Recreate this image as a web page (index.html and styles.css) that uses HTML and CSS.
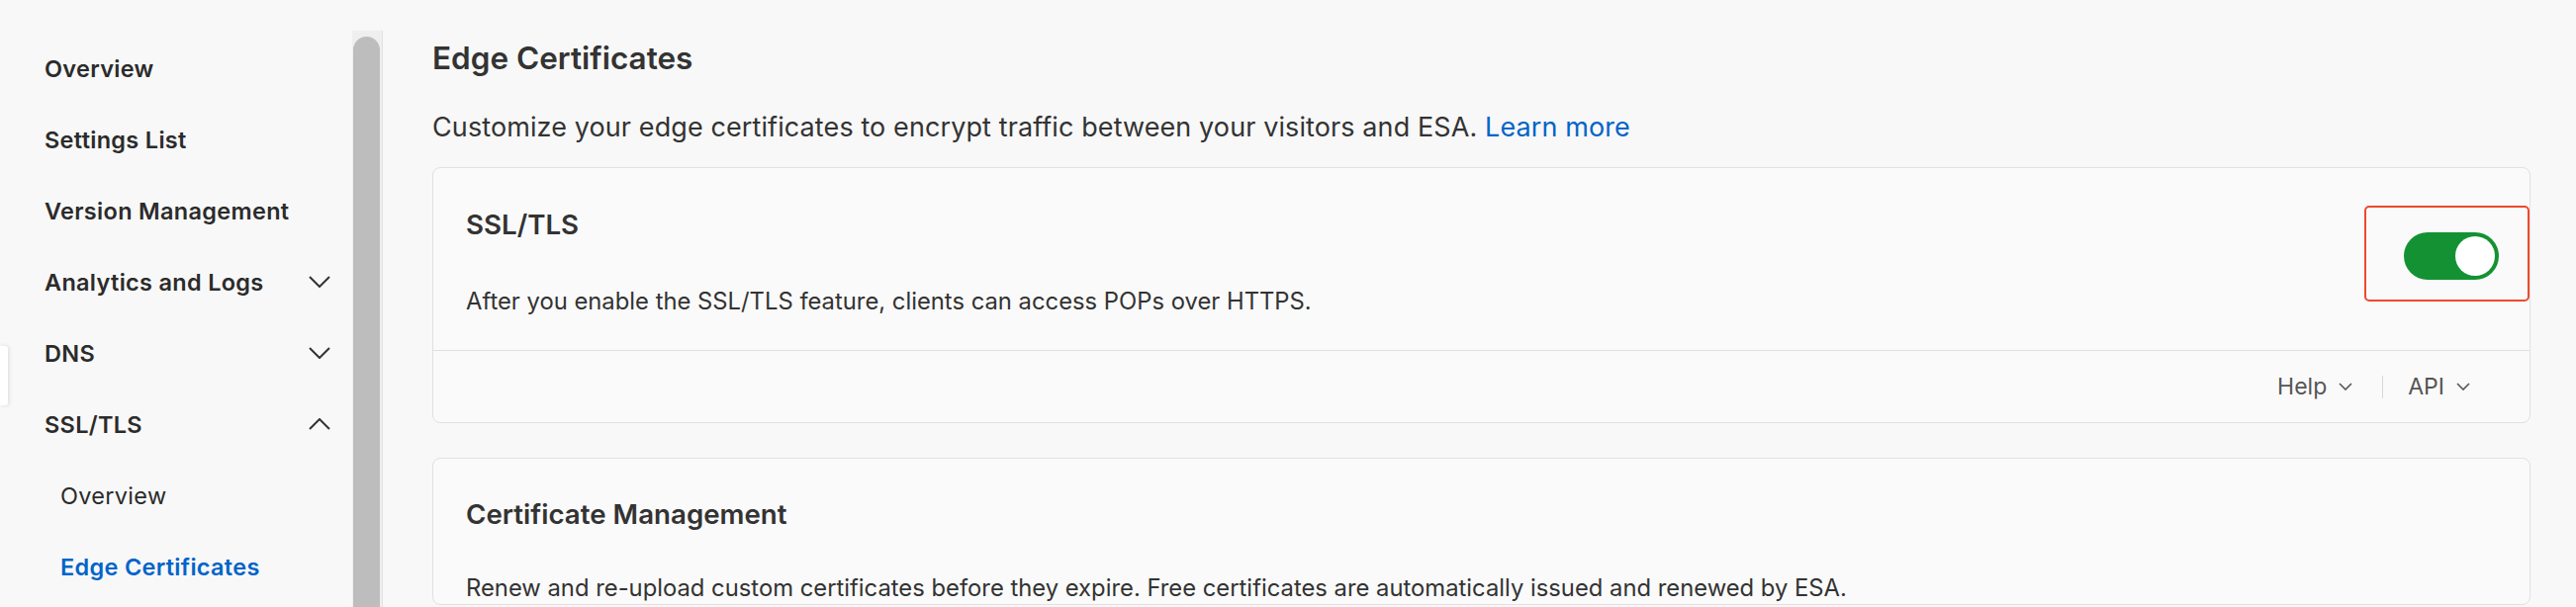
FILE: index.html
```html
<!DOCTYPE html>
<html lang="en">
<head>
<meta charset="utf-8">
<title>Edge Certificates</title>
<link rel="stylesheet" href="styles.css">
</head>
<body>
<div class="page">
  <div class="edge-tab"></div>
  <nav class="sidebar">
    <div class="nav-item">Overview</div>
    <div class="nav-item">Settings List</div>
    <div class="nav-item">Version Management</div>
    <div class="nav-item">Analytics and Logs
      <svg class="chev" viewBox="0 0 22 12" width="22" height="12"><path d="M1 1 L11 11 L21 1" fill="none" stroke="#333" stroke-width="2"/></svg>
    </div>
    <div class="nav-item">DNS
      <svg class="chev" viewBox="0 0 22 12" width="22" height="12"><path d="M1 1 L11 11 L21 1" fill="none" stroke="#333" stroke-width="2"/></svg>
    </div>
    <div class="nav-item">SSL/TLS
      <svg class="chev" viewBox="0 0 22 12" width="22" height="12"><path d="M1 11 L11 1 L21 11" fill="none" stroke="#333" stroke-width="2"/></svg>
    </div>
    <div class="nav-item sub">Overview</div>
    <div class="nav-item sub active">Edge Certificates</div>
  </nav>
  <div class="scrollbar"><div class="thumb"></div></div>
  <main class="main">
    <h1 class="title">Edge Certificates</h1>
    <p class="subtitle">Customize your edge certificates to encrypt traffic between your visitors and ESA. <a class="link">Learn more</a></p>
    <section class="card">
      <div class="card-body">
        <div class="card-text">
          <h2 class="card-title">SSL/TLS</h2>
          <p class="card-desc">After you enable the SSL/TLS feature, clients can access POPs over HTTPS.</p>
        </div>
        <div class="toggle-wrap">
          <div class="toggle"><div class="knob"></div></div>
          <div class="highlight"></div>
        </div>
      </div>
      <div class="card-footer">
        <span class="foot-link">Help
          <svg viewBox="0 0 14 8" width="14" height="8"><path d="M1 1 L7 7 L13 1" fill="none" stroke="#555" stroke-width="1.6"/></svg>
        </span>
        <span class="foot-sep"></span>
        <span class="foot-link">API
          <svg viewBox="0 0 14 8" width="14" height="8"><path d="M1 1 L7 7 L13 1" fill="none" stroke="#555" stroke-width="1.6"/></svg>
        </span>
      </div>
    </section>
    <section class="card card2">
      <div class="card-body">
        <div class="card-text">
          <h2 class="card-title">Certificate Management</h2>
          <p class="card-desc">Renew and re-upload custom certificates before they expire. Free certificates are automatically issued and renewed by ESA.</p>
        </div>
      </div>
    </section>
  </main>
</div>
</body>
</html>
```

FILE: styles.css
```css
* { box-sizing: border-box; }
html, body { margin: 0; padding: 0; }
body {
  background: #f8f8f8;
  font-family: Inter, "Liberation Sans", sans-serif;
  color: #333;
  width: 2604px;
  height: 614px;
  overflow: hidden;
}
.page {
  display: flex;
  height: 614px;
  position: relative;
}
.edge-tab {
  position: absolute;
  left: 0;
  top: 350px;
  width: 8px;
  height: 60px;
  background: #fff;
  border-radius: 0 3px 3px 0;
  box-shadow: 1px 0 4px rgba(0,0,0,0.12);
}
.sidebar {
  width: 356px;
  flex: none;
  padding: 33px 22px 0 45px;
}
.nav-item {
  height: 72px;
  display: flex;
  align-items: center;
  justify-content: space-between;
  font-size: 23.5px;
  font-weight: 600;
  color: #2b2b2b;
  letter-spacing: 0.3px;
}
.nav-item.sub {
  padding-left: 16px;
  font-weight: 400;
}
.nav-item.active {
  font-weight: 600;
  color: #0064c8;
}
.chev { flex: none; }
.scrollbar {
  width: 31px;
  flex: none;
  margin-top: 31px;
  background: #efefef;
  border-right: 1px solid #e2e2e2;
  padding: 6px 2px 0 1px;
}
.thumb {
  height: 100%;
  background: #bdbdbd;
  border-radius: 14px 14px 0 0;
}
.main {
  flex: 1;
  padding: 38px 46px 0 50px;
}
.title {
  margin: 0;
  font-size: 31.5px;
  font-weight: 600;
  line-height: 42px;
  color: #333;
}
.subtitle {
  margin: 29px 0 0;
  font-size: 27px;
  line-height: 40px;
  letter-spacing: 0.1px;
  color: #333;
}
.link { color: #0064c8; }
.card {
  margin-top: 20px;
  border: 1px solid #e1e1e1;
  border-radius: 8px;
  background: #fafafa;
}
.card2 { margin-top: 35px; }
.card-body {
  display: flex;
  align-items: flex-start;
  justify-content: space-between;
  padding: 39px 31px 0 33px;
  height: 184px;
}
.card2 .card-body { height: auto; padding-top: 38px; }
.card-title {
  margin: 0;
  font-size: 27.7px;
  font-weight: 600;
  line-height: 36px;
}
.card-desc {
  margin: 44px 0 0;
  font-size: 23.8px;
  line-height: 32px;
}
.card2 .card-desc { margin-top: 41px; }
.toggle-wrap {
  position: relative;
  margin-top: 26px;
}
.toggle {
  width: 96px;
  height: 48px;
  border-radius: 24px;
  background: #149233;
  display: flex;
  justify-content: flex-end;
  align-items: center;
  padding-right: 4px;
}
.knob {
  width: 40px;
  height: 40px;
  border-radius: 50%;
  background: #fff;
}
.highlight {
  position: absolute;
  left: -40px;
  top: -27px;
  width: 167px;
  height: 97px;
  border: 2px solid #ec4a2c;
  border-radius: 5px;
}
.card-footer {
  border-top: 1px solid #e1e1e1;
  height: 73px;
  display: flex;
  justify-content: flex-end;
  align-items: center;
  padding-right: 60px;
  font-size: 23px;
  color: #555;
}
.foot-link {
  display: flex;
  align-items: center;
  gap: 12px;
}
.foot-sep {
  width: 1px;
  height: 23px;
  background: #d8d8d8;
  margin: 0 25px 0 30px;
}
```
